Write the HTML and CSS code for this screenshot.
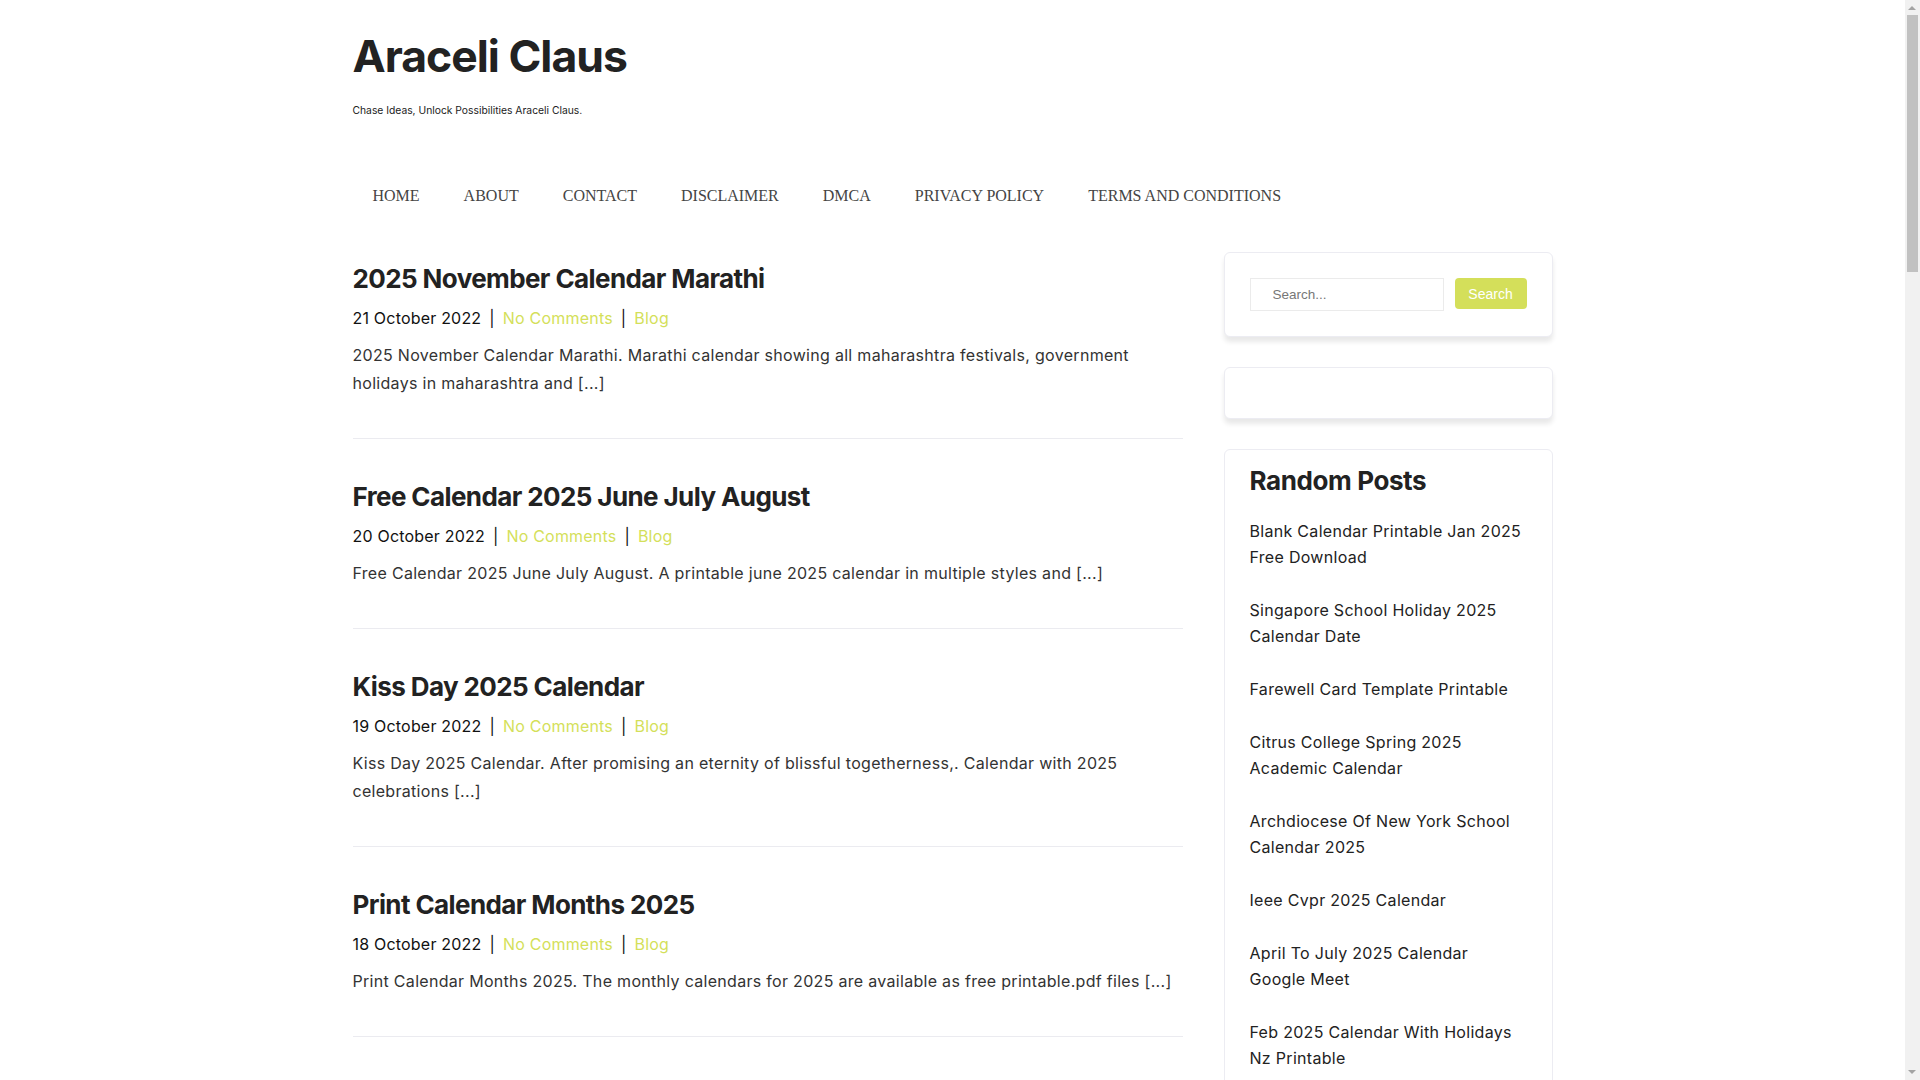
FILE: index.html
```html
<!DOCTYPE html>
<html lang="en">
<head>
<meta charset="utf-8">
<title>Araceli Claus</title>
<link rel="stylesheet" href="styles.css">
</head>
<body>
<div class="page">
<div class="container">
  <header class="site-header">
    <h1 class="site-title">Araceli Claus</h1>
    <p class="tagline">Chase Ideas, Unlock Possibilities Araceli Claus.</p>
    <nav class="main-nav">
      <a href="#">HOME</a>
      <a href="#">ABOUT</a>
      <a href="#">CONTACT</a>
      <a href="#">DISCLAIMER</a>
      <a href="#">DMCA</a>
      <a href="#">PRIVACY POLICY</a>
      <a href="#">TERMS AND CONDITIONS</a>
    </nav>
  </header>

  <div class="layout">
    <main class="posts">
      <article class="post">
        <h2 class="post-title">2025 November Calendar Marathi</h2>
        <div class="post-meta"><span>21 October 2022</span><span class="sep">|</span><a href="#">No Comments</a><span class="sep">|</span><a href="#">Blog</a></div>
        <p class="excerpt">2025 November Calendar Marathi. Marathi calendar showing all maharashtra festivals, government holidays in maharashtra and [...]</p>
      </article>
      <article class="post">
        <h2 class="post-title">Free Calendar 2025 June July August</h2>
        <div class="post-meta"><span>20 October 2022</span><span class="sep">|</span><a href="#">No Comments</a><span class="sep">|</span><a href="#">Blog</a></div>
        <p class="excerpt">Free Calendar 2025 June July August. A printable june 2025 calendar in multiple styles and [...]</p>
      </article>
      <article class="post">
        <h2 class="post-title">Kiss Day 2025 Calendar</h2>
        <div class="post-meta"><span>19 October 2022</span><span class="sep">|</span><a href="#">No Comments</a><span class="sep">|</span><a href="#">Blog</a></div>
        <p class="excerpt">Kiss Day 2025 Calendar. After promising an eternity of blissful togetherness,. Calendar with 2025 celebrations [...]</p>
      </article>
      <article class="post">
        <h2 class="post-title">Print Calendar Months 2025</h2>
        <div class="post-meta"><span>18 October 2022</span><span class="sep">|</span><a href="#">No Comments</a><span class="sep">|</span><a href="#">Blog</a></div>
        <p class="excerpt">Print Calendar Months 2025. The monthly calendars for 2025 are available as free printable.pdf files [...]</p>
      </article>
      <article class="post">
        <h2 class="post-title">Printable 2025 Calendar One Page</h2>
        <div class="post-meta"><span>17 October 2022</span><span class="sep">|</span><a href="#">No Comments</a><span class="sep">|</span><a href="#">Blog</a></div>
        <p class="excerpt">Printable 2025 Calendar One Page. A yearly calendar on a single page with holidays and notes [...]</p>
      </article>
      <article class="post">
        <h2 class="post-title">2025 Weekly Planner Template</h2>
        <div class="post-meta"><span>16 October 2022</span><span class="sep">|</span><a href="#">No Comments</a><span class="sep">|</span><a href="#">Blog</a></div>
        <p class="excerpt">2025 Weekly Planner Template. Plan your week with these free printable templates [...]</p>
      </article>
    </main>

    <aside class="sidebar">
      <section class="widget">
        <form class="search-form">
          <input class="search-input" type="text" placeholder="Search...">
          <button class="search-btn" type="button">Search</button>
        </form>
      </section>
      <section class="widget widget-empty"></section>
      <section class="widget widget-list">
        <h3 class="widget-title">Random Posts</h3>
        <ul class="random-list">
          <li><a href="#">Blank Calendar Printable Jan 2025 Free Download</a></li>
          <li><a href="#">Singapore School Holiday 2025 Calendar Date</a></li>
          <li><a href="#">Farewell Card Template Printable</a></li>
          <li><a href="#">Citrus College Spring 2025 Academic Calendar</a></li>
          <li><a href="#">Archdiocese Of New York School Calendar 2025</a></li>
          <li><a href="#">Ieee Cvpr 2025 Calendar</a></li>
          <li><a href="#">April To July 2025 Calendar Google Meet</a></li>
          <li><a href="#">Feb 2025 Calendar With Holidays Nz Printable</a></li>
          <li><a href="#">Lunar Calendar 2025 Printable</a></li>
          <li><a href="#">School Calendar 2025 Template</a></li>
        </ul>
      </section>
    </aside>
  </div>
</div>
</div>

<div class="scrollbar" aria-hidden="true">
  <span class="scroll-arrow scroll-up"></span>
  <span class="scroll-thumb"></span>
  <span class="scroll-arrow scroll-down"></span>
</div>
</body>
</html>
```

FILE: styles.css
```css
* { box-sizing: border-box; }

html, body {
  margin: 0;
  padding: 0;
  background: #ffffff;
}

body {
  font-family: "Inter", "Open Sans", sans-serif;
  color: #222222;
  font-size: 16px;
}

a { text-decoration: none; }

.page {
  width: calc(100% - 15px);
}

.container {
  width: 1200px;
  margin: 0 auto;
}

/* fake browser scrollbar, overlaying the right edge */
.scrollbar {
  position: fixed;
  top: 0;
  right: 0;
  width: 15px;
  height: 100vh;
  background: #f1f1f1;
}

.scroll-thumb {
  position: absolute;
  top: 15px;
  left: 2px;
  width: 11px;
  height: 257px;
  background: #c1c1c1;
}

.scroll-arrow {
  position: absolute;
  left: 3px;
  width: 0;
  height: 0;
  border-left: 4px solid transparent;
  border-right: 4px solid transparent;
}

.scroll-up {
  top: 6px;
  border-bottom: 4px solid #a3a3a3;
}

.scroll-down {
  bottom: 6px;
  border-top: 4px solid #a3a3a3;
}

.site-header {
  padding-top: 27px;
  display: flex;
  flex-direction: column;
}

.site-title {
  margin: 0;
  font-size: 44.5px;
  line-height: 58px;
  font-weight: 700;
  letter-spacing: -1px;
  color: #222222;
}

.tagline {
  margin: 17px 0 0;
  font-size: 10.3px;
  line-height: 16px;
  color: #222222;
}

.main-nav {
  margin-top: 66px;
  display: flex;
  gap: 4px;
  line-height: 24px;
}

.main-nav a {
  font-family: "Liberation Serif", serif;
  font-size: 16px;
  color: #444444;
  padding: 0 20px;
}

.layout {
  margin-top: 13px;
  display: grid;
  grid-template-columns: 830px 329px;
  column-gap: 41px;
  align-items: start;
}

.post {
  padding: 40px 0 41px;
  border-bottom: 1px solid #ebebf0;
}

.post-title {
  margin: 0;
  font-size: 26px;
  line-height: 36px;
  font-weight: 700;
  letter-spacing: -0.6px;
  color: #222222;
}

.post-meta {
  margin-top: 9px;
  font-size: 16px;
  line-height: 24px;
  letter-spacing: 0.2px;
  color: #111111;
}

.post-meta a { color: #d4df5a; }

.post-meta .sep {
  margin: 0 8px;
}

.excerpt {
  margin: 11px 0 0;
  font-size: 16px;
  line-height: 28px;
  letter-spacing: 0.3px;
  color: #333333;
}

.sidebar {
  padding-top: 31px;
}

.widget {
  border: 1px solid #ececf2;
  border-radius: 6px;
  padding: 25px;
  margin-bottom: 30px;
  background: #ffffff;
  box-shadow: 0 5px 5px rgba(0, 0, 0, 0.09);
}

.search-form {
  display: flex;
  gap: 11px;
  align-items: flex-start;
}

.search-input {
  width: 194px;
  height: 33px;
  border: 1px solid #ebebeb;
  padding: 0 0 0 22px;
  font-family: "Liberation Sans", Arial, sans-serif;
  font-size: 13.5px;
  color: #555555;
  outline: none;
}

.search-input::placeholder { color: #777777; }

.search-btn {
  width: 73px;
  height: 31px;
  border: none;
  border-radius: 4px;
  background: #d4df5a;
  color: #ffffff;
  font-family: "Liberation Sans", Arial, sans-serif;
  font-size: 14px;
  padding: 0;
}

.widget-list {
  padding: 15px 25px 25px;
  box-shadow: none;
}

.widget-title {
  margin: 0;
  font-size: 26px;
  line-height: 32px;
  font-weight: 700;
  letter-spacing: -0.4px;
  color: #222222;
}

.random-list {
  list-style: none;
  margin: 21px 0 0;
  padding: 0;
}

.random-list li {
  margin-bottom: 27px;
  font-size: 16px;
  line-height: 26px;
  letter-spacing: 0.3px;
}

.random-list li:last-child { margin-bottom: 0; }

.random-list a { color: #222222; }
```
